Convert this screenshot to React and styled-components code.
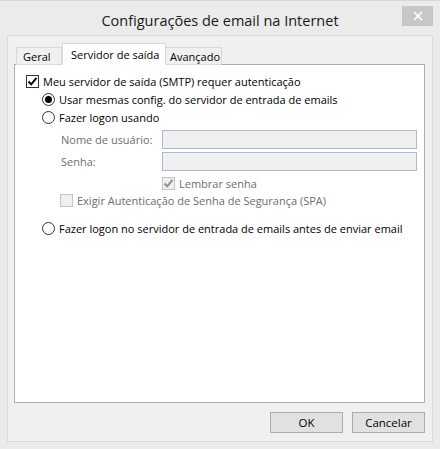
import React from 'react';
import styled, { createGlobalStyle } from 'styled-components';

const GlobalStyle = createGlobalStyle`
  html, body {
    margin: 0;
    padding: 0;
    background: #ebebeb;
  }
  body {
    font-family: 'Open Sans', 'Noto Sans', sans-serif;
    font-size: 11px;
    color: #000;
  }
`;

const App = () => {
  return (
    <>
      <GlobalStyle />
      <Window>
        <TitleBar>
          <Title>Configurações de email na Internet</Title>
          <CloseButton>
            <svg width="10" height="10" viewBox="0 0 10 10">
              <path d="M1 1 L9 9 M9 1 L1 9" stroke="#fff" strokeWidth="1.6" />
            </svg>
          </CloseButton>
        </TitleBar>
        <Client>
          <Tabs>
            <Tab width={46} pad="0 0 0 6px">Geral</Tab>
            <Tab active width={104} pad="0 0 0 8px">Servidor de saída</Tab>
            <Tab width={57} pad="0 0 0 4px">Avançado</Tab>
          </Tabs>
          <Panel>
            <Row>
              <CheckBox checked />
              <Label>Meu servidor de saída (SMTP) requer autenticação</Label>
            </Row>
            <Indent>
              <Row>
                <Radio checked />
                <Label>Usar mesmas config. do servidor de entrada de emails</Label>
              </Row>
              <Row>
                <Radio />
                <Label>Fazer logon usando</Label>
              </Row>
              <Fields>
                <FieldLabel>Nome de usuário:</FieldLabel>
                <Input />
                <FieldLabel>Senha:</FieldLabel>
                <Input />
                <span />
                <Row>
                  <CheckBox checked disabled />
                  <Label disabled>Lembrar senha</Label>
                </Row>
              </Fields>
              <SpaRow>
                <CheckBox disabled />
                <Label disabled>Exigir Autenticação de Senha de Segurança (SPA)</Label>
              </SpaRow>
              <LastRow>
                <Radio />
                <Label>Fazer logon no servidor de entrada de emails antes de enviar email</Label>
              </LastRow>
            </Indent>
          </Panel>
          <Footer>
            <Button>OK</Button>
            <Button>Cancelar</Button>
          </Footer>
        </Client>
      </Window>
    </>
  );
};

const CheckBox = ({ checked, disabled }) => (
  <Box disabled={disabled}>
    {checked && (
      <svg width="11" height="11" viewBox="0 0 11 11">
        <path
          d="M1.5 5.5 L4.2 8.3 L9.5 1.8"
          fill="none"
          stroke={disabled ? '#8d8d8d' : '#000'}
          strokeWidth="1.9"
        />
      </svg>
    )}
  </Box>
);

const Radio = ({ checked }) => (
  <RadioCircle>{checked && <RadioDot />}</RadioCircle>
);

export default App;

const Window = styled.div`
  width: 440px;
  height: 449px;
  box-sizing: border-box;
  background: #ebebeb;
  border-top: 1px solid #d6d6d6;
  display: flex;
  flex-direction: column;
`;

const TitleBar = styled.div`
  position: relative;
  height: 33px;
  display: flex;
  align-items: center;
  justify-content: center;
`;

const Title = styled.div`
  font-family: 'Open Sans', sans-serif;
  font-size: 14.5px;
  color: #1a1a1a;
  padding-top: 6px;
`;

const CloseButton = styled.div`
  position: absolute;
  right: 7px;
  top: 5px;
  width: 31px;
  height: 20px;
  background: #c7c7c7;
  display: flex;
  align-items: center;
  justify-content: center;
`;

const Client = styled.div`
  flex: 1;
  margin: 1px 7px 7px 7px;
  border: 1px solid #d9d9d9;
  background: #f0f0f0;
  display: flex;
  flex-direction: column;
  padding: 8px 7px 0 6px;
`;

const Tabs = styled.div`
  display: flex;
  align-items: flex-end;
  height: 21px;
  padding-left: 2px;
  position: relative;
  z-index: 1;
  margin-bottom: -1px;
`;

const Tab = styled.div`
  box-sizing: border-box;
  width: ${(p) => p.width}px;
  height: ${(p) => (p.active ? '22px' : '18px')};
  padding: ${(p) => p.pad};
  border: 1px solid #d9d9d9;
  border-bottom: ${(p) => (p.active ? '1px solid #fff' : '1px solid #d9d9d9')};
  background: ${(p) => (p.active ? '#fff' : '#f0f0f0')};
  color: #000;
  display: flex;
  align-items: center;
  position: relative;
  z-index: ${(p) => (p.active ? 2 : 1)};
  line-height: 1;
  margin-right: ${(p) => (p.active ? '-1px' : '0')};
`;

const Panel = styled.div`
  height: 339px;
  box-sizing: border-box;
  background: #fff;
  border: 1px solid #adadad;
  padding: 7px 0 0 11px;
`;

const Row = styled.div`
  display: flex;
  align-items: center;
  height: 18px;
`;

const Indent = styled.div`
  padding-left: 16px;
  display: flex;
  flex-direction: column;
`;

const Label = styled.span`
  margin-left: 4px;
  white-space: nowrap;
  color: ${(p) => (p.disabled ? '#6d6d6d' : '#000')};
  line-height: 1;
`;

const Box = styled.div`
  width: 13px;
  height: 13px;
  box-sizing: border-box;
  border: 1px solid ${(p) => (p.disabled ? '#c4c4c4' : '#333')};
  background: ${(p) => (p.disabled ? '#f0f0f0' : '#fff')};
  display: flex;
  align-items: center;
  justify-content: center;
  flex-shrink: 0;
`;

const RadioCircle = styled.div`
  width: 13px;
  height: 13px;
  box-sizing: border-box;
  border-radius: 50%;
  border: 1px solid #333;
  background: #fff;
  display: flex;
  align-items: center;
  justify-content: center;
  flex-shrink: 0;
`;

const RadioDot = styled.div`
  width: 7px;
  height: 7px;
  border-radius: 50%;
  background: #000;
`;

const Fields = styled.div`
  display: grid;
  grid-template-columns: 101px 255px;
  row-gap: 3px;
  align-items: center;
  padding: 4px 0 0 19px;
`;

const FieldLabel = styled.span`
  color: #6d6d6d;
  white-space: nowrap;
`;

const Input = styled.div`
  height: 19px;
  box-sizing: border-box;
  border: 1px solid #a8bbd2;
  background: #f0f0f0;
`;

const SpaRow = styled(Row)`
  padding-left: 18px;
  margin-top: -1px;
`;

const LastRow = styled(Row)`
  margin-top: 10px;
`;

const Footer = styled.div`
  display: flex;
  justify-content: flex-end;
  gap: 9px;
  padding: 9px 0 0 0;
`;

const Button = styled.div`
  width: 73px;
  height: 21px;
  box-sizing: border-box;
  border: 1px solid #adadad;
  background: #e1e1e1;
  display: flex;
  align-items: center;
  justify-content: center;
  font-size: 11.5px;
  color: #000;
`;
